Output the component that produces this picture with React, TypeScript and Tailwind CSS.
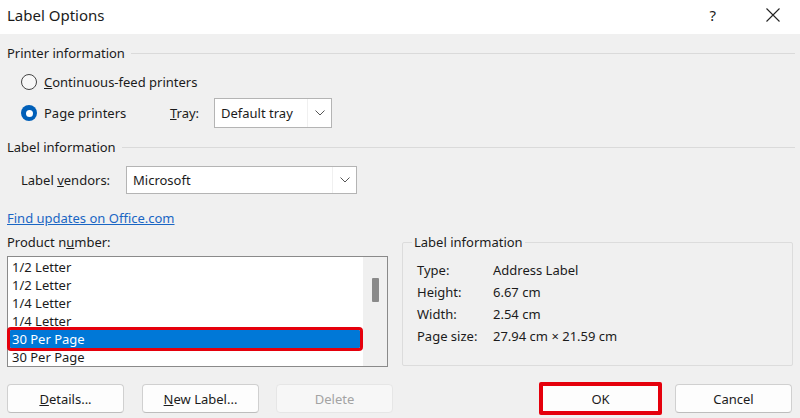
import React from "react";

const font = { fontFamily: '"Noto Sans", "Open Sans", sans-serif' };

function Chevron(){
  return (
    <svg width="10" height="6" viewBox="0 0 10 6" className="text-[#555]">
      <path d="M0.5 0.5 L5 5 L9.5 0.5" fill="none" stroke="currentColor" strokeWidth="1" />
    </svg>
  );
}

function Select({ value, className }:{ value:string; className:string }){
  return (
    <div className={`flex items-stretch bg-white border border-[#b4b4b4] ${className}`}>
      <div className="flex-1 flex items-center pl-[6px]">{value}</div>
      <div className="w-[24px] flex items-center justify-center border-l border-[#f0f0f0]"><Chevron/></div>
    </div>
  );
}

function GroupTitle({ text }:{ text:string }){
  return (
    <div className="flex items-center h-[18px]">
      <span>{text}</span>
      <div className="flex-1 h-px bg-[#dadada] ml-[6px] mr-[-2px]"></div>
    </div>
  );
}

function Radio({ checked }:{ checked?:boolean }){
  return checked ? (
    <div className="w-[16px] h-[16px] rounded-full bg-[#005fb8] flex items-center justify-center">
      <div className="w-[7px] h-[7px] rounded-full bg-white"></div>
    </div>
  ) : (
    <div className="w-[16px] h-[16px] rounded-full border border-[#444] bg-[#f7f7f7]"></div>
  );
}

function Btn({ children, disabled, className="" }:{ children:React.ReactNode; disabled?:boolean; className?:string }){
  return (
    <div className={`w-[117px] h-[29px] rounded-[4px] flex items-center justify-center border ${disabled ? "bg-[#f7f7f7] border-[#e6e6e6] text-[#a3a3a3]" : "bg-[#fdfdfd] border-[#d0d0d0] border-b-[#bdbdbd]"} ${className}`}>
      {children}
    </div>
  );
}

const items = ["1/2 Letter","1/2 Letter","1/4 Letter","1/4 Letter","30 Per Page","30 Per Page"];

export default function App(){
  return (
    <div style={font} className="w-[800px] h-[418px] bg-[#f0f0f0] text-[13px] text-[#1b1b1b] leading-[18px] overflow-hidden">
      {/* title bar */}
      <div className="h-[34px] bg-white flex items-center justify-between">
        <div className="pl-[7px] text-[15px] pb-[4px]">Label Options</div>
        <div className="flex items-center pb-[4px]">
          <span className="text-[15px] mr-[50px]">?</span>
          <svg width="14" height="14" viewBox="0 0 14 14" className="mr-[20px]">
            <path d="M0.5 0.5 L13.5 13.5 M13.5 0.5 L0.5 13.5" stroke="#222" strokeWidth="1.1" />
          </svg>
        </div>
      </div>

      <div className="px-[7px]">
        <div className="mt-[10px]"><GroupTitle text="Printer information"/></div>

        <div className="mt-[11px] h-[18px] flex items-center pl-[14px] gap-[7px]">
          <Radio/>
          <span><u>C</u>ontinuous-feed printers</span>
        </div>

        <div className="mt-[7px] h-[30px] flex items-center pl-[14px]">
          <Radio checked/>
          <span className="ml-[7px] w-[126px]">Pa<u>g</u>e printers</span>
          <span className="w-[44px]"><u>T</u>ray:</span>
          <Select value="Default tray" className="w-[118px] h-[30px]"/>
        </div>

        <div className="mt-[10px]"><GroupTitle text="Label information"/></div>

        <div className="mt-[10px] h-[28px] flex items-center pl-[14px]">
          <span className="w-[105px]">Label <u>v</u>endors:</span>
          <Select value="Microsoft" className="w-[231px] h-[28px]"/>
        </div>

        <div className="mt-[15px] h-[18px] text-[#1a66c4] underline">Find updates on Office.com</div>

        <div className="mt-[6px] flex items-start">
          <div className="w-[381px]">
            <div className="h-[18px]">Product n<u>u</u>mber:</div>
            <div className="mt-[5px] h-[111px] bg-white border border-[#8a8a8a] flex">
              <div className="flex-1 pt-[1px]">
                {items.map((t,i)=> i===4 ? (
                  <div key={i} className="relative z-10 ml-[2px] w-[350px] h-[18px] bg-[#0078d7] text-white pl-[2px] rounded-[1px] outline-[3px] outline-[#e5000c]">{t}</div>
                ) : (
                  <div key={i} className="h-[18px] pl-[4px]">{t}</div>
                ))}
              </div>
              <div className="w-[24px] bg-[#f0f0f0] flex justify-center pt-[21px]">
                <div className="w-[7px] h-[24px] bg-[#8a8a8a] rounded-[1px]"></div>
              </div>
            </div>
          </div>

          <fieldset className="ml-[14px] w-[391px] h-[133px] border border-[#dcdcdc] rounded-[2px] pl-[14px]">
            <legend className="ml-[-5px] px-[2px]">Label information</legend>
            <div className="grid grid-cols-[76px_1fr] gap-y-[4px] mt-[10px]">
              <span>Type:</span><span>Address Label</span>
              <span>Height:</span><span>6.67 cm</span>
              <span>Width:</span><span>2.54 cm</span>
              <span>Page size:</span><span>27.94 cm × 21.59 cm</span>
            </div>
          </fieldset>
        </div>

        <div className="mt-[15px] h-[33px] flex items-center">
          <Btn><span><u>D</u>etails...</span></Btn>
          <Btn className="ml-[18px]"><span><u>N</u>ew Label...</span></Btn>
          <Btn disabled className="ml-[17px]">Delete</Btn>
          <div className="ml-[146px] w-[123px] h-[33px] border-[4px] border-[#e5000c] rounded-[2px] bg-[#fdfdfd] flex items-center justify-center">OK</div>
          <Btn className="ml-[13px]">Cancel</Btn>
        </div>
      </div>
    </div>
  );
}
